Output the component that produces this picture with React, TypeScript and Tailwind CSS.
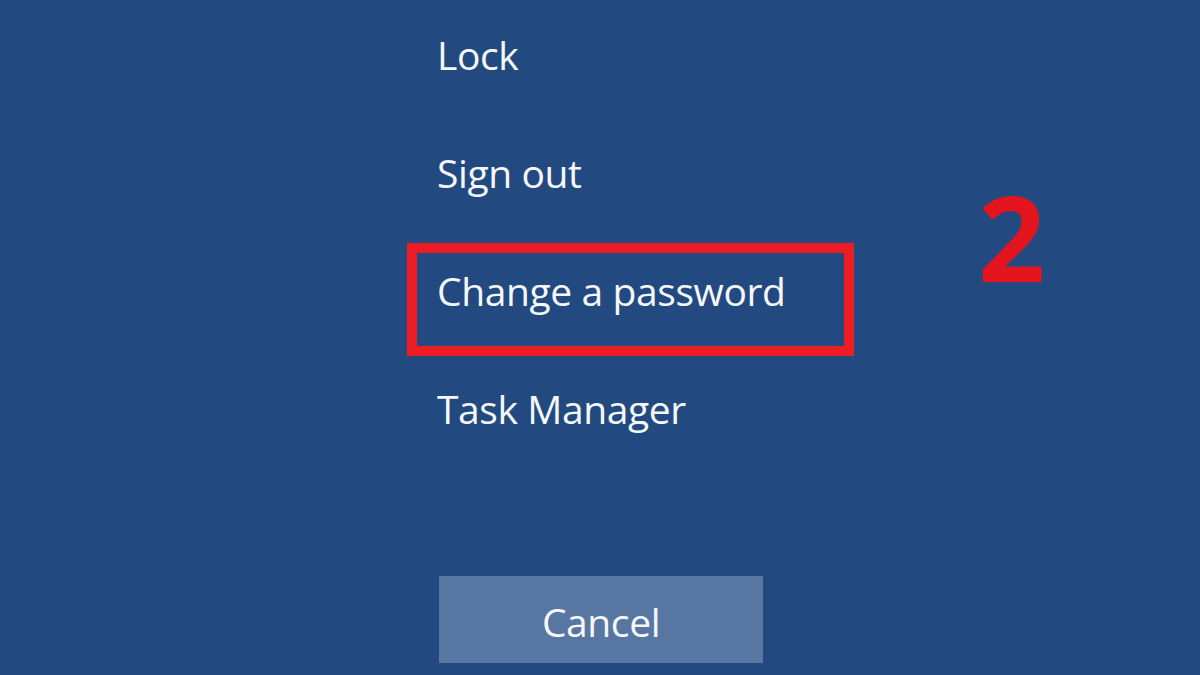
export default function App() {
  const font = { fontFamily: '"Open Sans", "Noto Sans", sans-serif' };
  return (
    <div className="relative w-[1200px] h-[675px] overflow-hidden bg-[#234a80]" style={font}>
      <div className="flex flex-col pl-[437px] pt-[35px] gap-[79px] text-[39px] leading-[39px] tracking-[-0.4px] text-[#f5f7fb]">
        <div>Lock</div>
        <div>Sign out</div>
        <div>Change a password</div>
        <div>Task Manager</div>
      </div>
      <div className="ml-[439px] mt-[148px] w-[324px] h-[87px] bg-[#5876a2] flex items-center justify-center pt-[3px] text-[39px] leading-none tracking-[-0.4px] text-[#f5f7fb]">
        Cancel
      </div>
      <div className="absolute left-[407px] top-[243px] w-[447px] h-[113px] border-[10px] border-[#ee1c24]" />
      <div className="absolute left-[978px] top-[178px] text-[118px] leading-none font-bold text-[#e3141e]">2</div>
    </div>
  );
}
